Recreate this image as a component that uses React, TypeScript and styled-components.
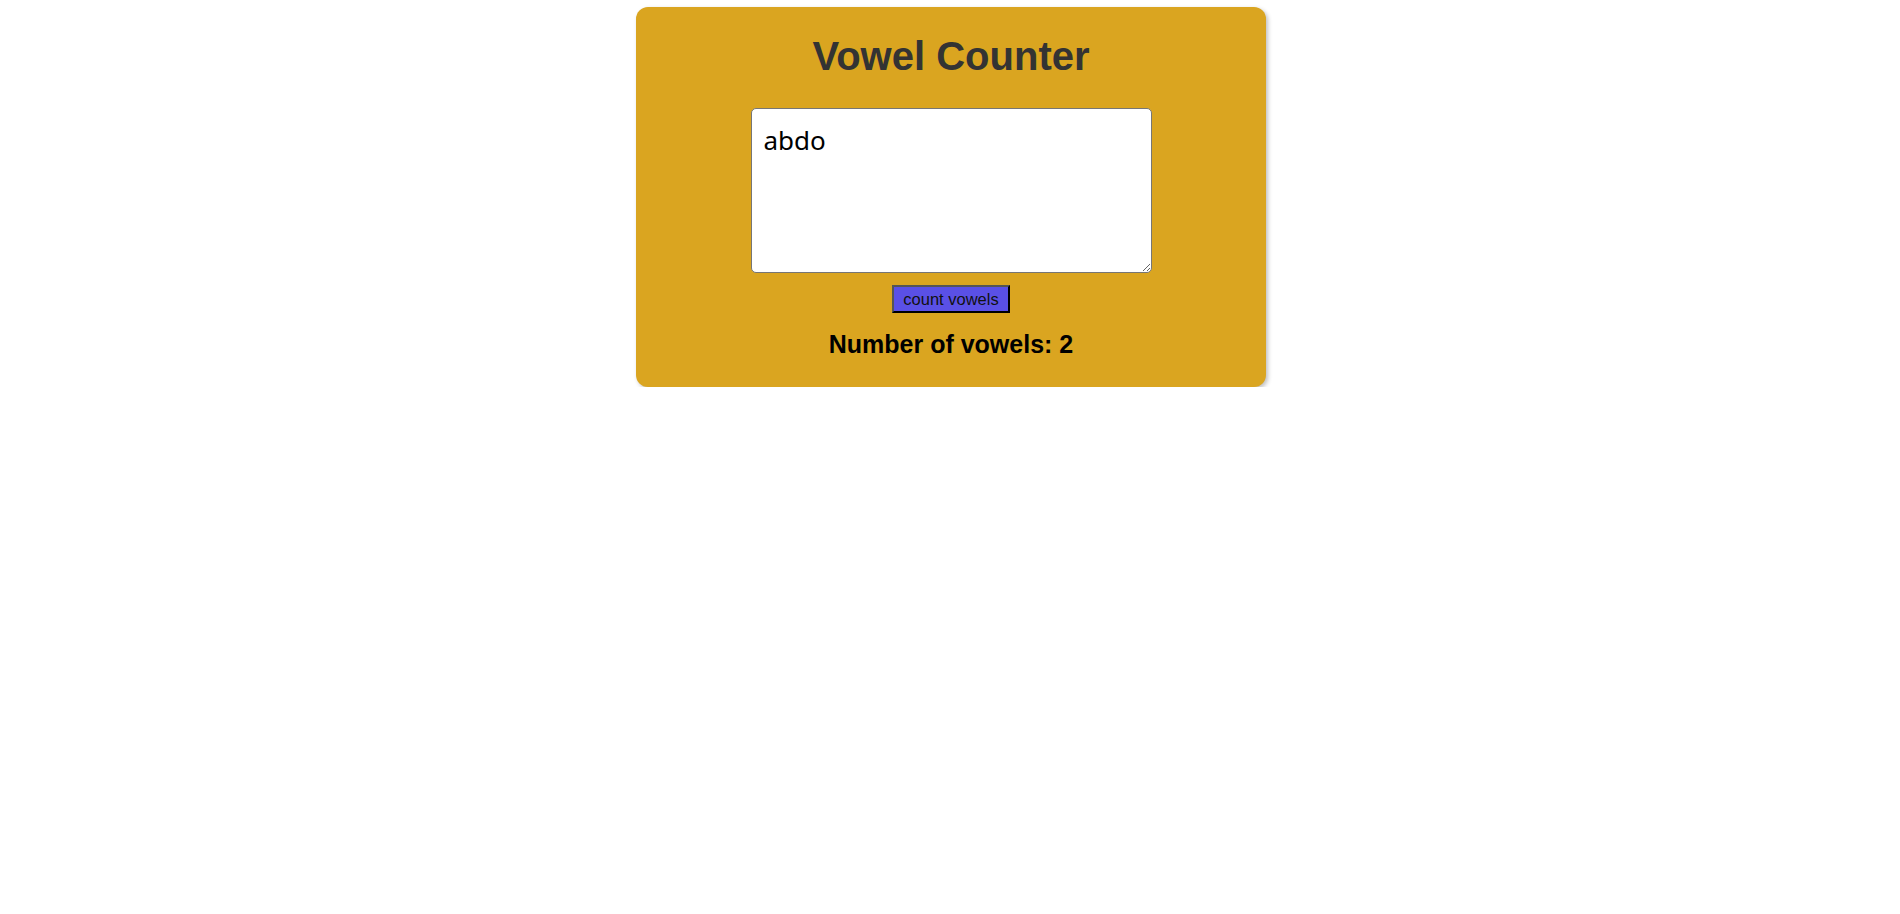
import { useState } from "react";
import styled, { createGlobalStyle } from "styled-components";

const GlobalStyle = createGlobalStyle`
  html, body {
    margin: 0;
    padding: 0;
    background: #fff;
  }
  body {
    font-family: "Liberation Sans", Arial, sans-serif;
  }
`;

const Page = styled.main`
  display: flex;
  justify-content: center;
  padding: 7px 0 0 2px;
`;

const Card = styled.section`
  width: 630px;
  box-sizing: border-box;
  display: flex;
  flex-direction: column;
  align-items: center;
  padding: 26px 20px 29px;
  background-color: #daa520;
  border-radius: 12px;
  box-shadow: 2px 2px 4px rgba(0, 0, 0, 0.25);
`;

const Title = styled.h1`
  margin: 0 0 29px;
  font-size: 40px;
  line-height: 46px;
  font-weight: 700;
  color: #333;
`;

const TextInput = styled.textarea`
  display: block;
  box-sizing: border-box;
  width: 401px;
  height: 165px;
  margin: 0;
  padding: 13px 12px;
  border: 1px solid #767676;
  border-radius: 5px;
  background: #fff;
  color: #000;
  font-family: "Noto Sans", "Open Sans", sans-serif;
  font-size: 26px;
  line-height: normal;
  outline: none;
`;

const CountButton = styled.button`
  margin-top: 12px;
  padding: 3px 9px;
  border: 2px outset #3a3a3a;
  border-top-color: #555;
  border-left-color: #555;
  border-right-color: #111;
  border-bottom-color: #111;
  background-color: #5a50e6;
  color: #111;
  font-family: "Liberation Sans", Arial, sans-serif;
  font-size: 16.5px;
  line-height: 18px;
  cursor: pointer;
`;

const Result = styled.h2`
  margin: 17px 0 0;
  font-size: 25px;
  line-height: 28px;
  font-weight: 700;
  color: #000;
`;

const countVowels = (text: string) =>
  (text.match(/[aeiou]/gi) || []).length;

export default function App() {
  const [text, setText] = useState("abdo");
  const [count, setCount] = useState(2);

  return (
    <>
      <GlobalStyle />
      <Page>
        <Card>
          <Title>Vowel Counter</Title>
          <TextInput
            value={text}
            spellCheck
            onChange={(e) => setText(e.target.value)}
          />
          <CountButton onClick={() => setCount(countVowels(text))}>
            count vowels
          </CountButton>
          <Result>Number of vowels: {count}</Result>
        </Card>
      </Page>
    </>
  );
}
